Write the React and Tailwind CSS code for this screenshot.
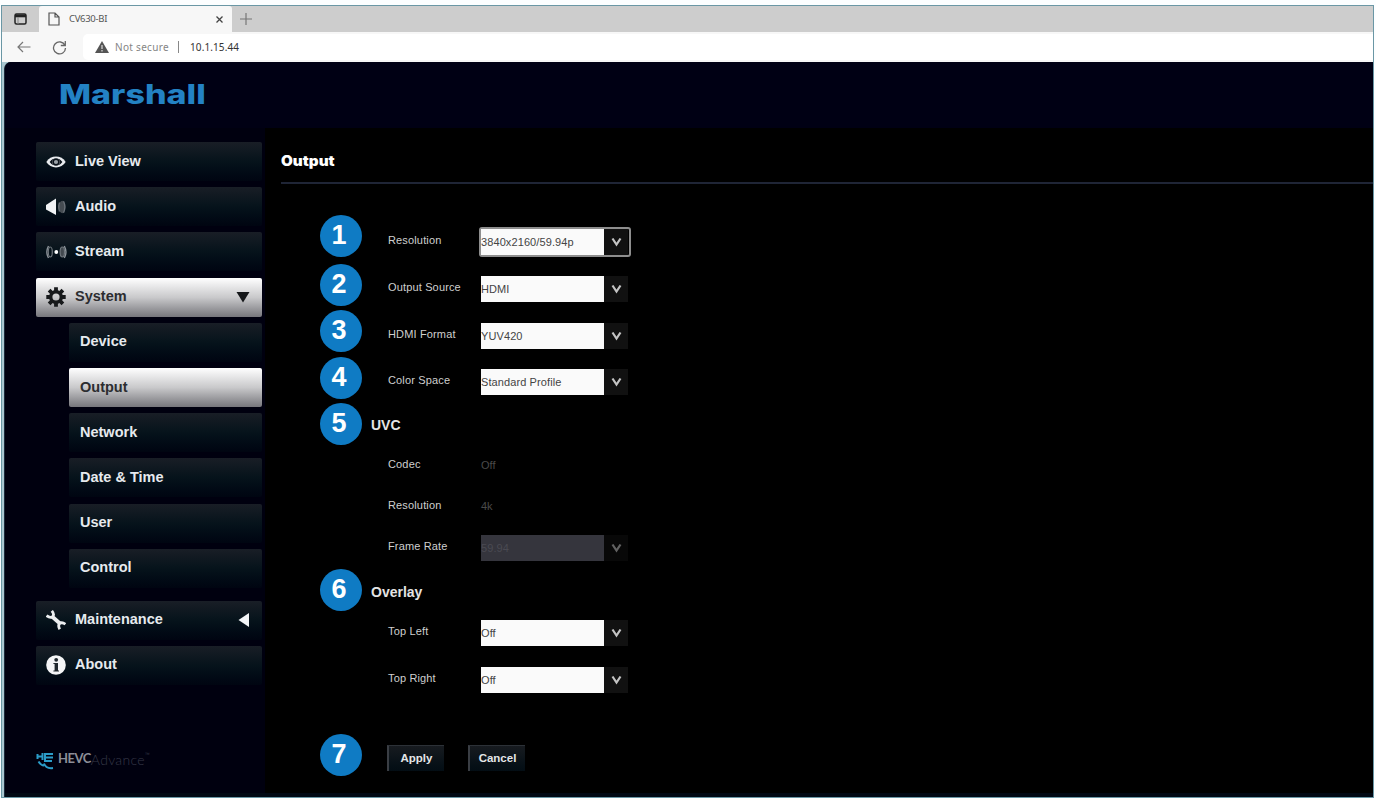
import clsx from 'clsx'

const mainItems = [
  { name: 'Live View', icon: EyeIcon },
  { name: 'Audio', icon: AudioIcon },
  { name: 'Stream', icon: StreamIcon },
  { name: 'System', icon: GearIcon, active: true, arrow: 'down' },
]

const systemItems = [
  { name: 'Device' },
  { name: 'Output', active: true },
  { name: 'Network' },
  { name: 'Date & Time' },
  { name: 'User' },
  { name: 'Control' },
]

const bottomItems = [
  { name: 'Maintenance', icon: WrenchIcon, arrow: 'left' },
  { name: 'About', icon: InfoIcon },
]

const steps = [
  { n: 1, gap: 'mt-0' },
  { n: 2, gap: 'mt-[7px]' },
  { n: 3, gap: 'mt-1' },
  { n: 4, gap: 'mt-[5px]' },
  { n: 5, gap: 'mt-1' },
  { n: 6, gap: 'mt-[124px]' },
  { n: 7, gap: 'mt-[123px]' },
]

function EyeIcon() {
  return (
    <svg width="20" height="20" viewBox="0 0 20 20" fill="none">
      <path d="M.3 10C4.500 2.800 15.500 2.800 19.700 10C15.500 17.200 4.500 17.200 .3 10Z" fill="#e8ebee" />
      <path d="M3.600 10Q5.400 7.700 7.300 6.700Q5.300 10 7.300 13.300Q5.400 12.300 3.600 10ZM16.400 10Q14.600 7.700 12.700 6.700Q14.700 10 12.700 13.300Q14.600 12.300 16.400 10Z" fill="#0b131b" />
      <circle cx="10" cy="10" r="2.900" fill="#9aa1a7" stroke="#0b131b" strokeWidth="1.600" />
    </svg>
  )
}

function AudioIcon() {
  return (
    <svg width="20" height="20" viewBox="0 0 20 20" fill="none">
      <path d="M0 8L10 1.500V18L0 12.500Z" fill="#f1f3f5" />
      <ellipse cx="16.200" cy="10" rx="3.200" ry="6.200" fill="#454c52" />
      <path d="M13.500 5.500Q12 10 13.500 14.500M17.500 4.300Q20.300 10 17.500 15.700" stroke="#6b7279" strokeWidth="1.300" />
    </svg>
  )
}

function StreamIcon() {
  return (
    <svg width="21" height="20" viewBox="0 0 21 20" fill="none">
      <path d="M2.500 4Q-.8 10 2.500 16" stroke="#8b9298" strokeWidth="1.400" />
      <ellipse cx="4.300" cy="10" rx="2" ry="5" stroke="#70777d" strokeWidth="1.200" />
      <circle cx="10.300" cy="10" r="1.900" fill="#fff" />
      <ellipse cx="16.300" cy="10" rx="2.200" ry="5" fill="#42494f" stroke="#70777d" strokeWidth="1.200" />
      <path d="M18.300 4Q21.600 10 18.300 16" stroke="#8b9298" strokeWidth="1.400" />
    </svg>
  )
}

function GearIcon() {
  return (
    <svg width="20" height="20" viewBox="0 0 20 20" fill="none" stroke="#17191b">
      <circle cx="10" cy="10" r="5.300" strokeWidth="3.400" />
      <path strokeWidth="3.800" d="M10 .3V4M10 16V19.700M.3 10H4M16 10H19.700M3.100 3.100L5.800 5.800M14.200 14.200L16.900 16.900M3.100 16.900L5.800 14.200M14.200 5.800L16.900 3.100" />
    </svg>
  )
}

function WrenchIcon() {
  return (
    <svg width="20" height="20" viewBox="0 0 20 20" fill="none" stroke="#eceef0">
      <path strokeWidth="3.800" d="M6 6.500L14 13.500" />
      <path strokeWidth="2.800" d="M5.800 .8Q8.800 4.600 6.600 6.600Q4.200 8.400 .6 5.600M19.400 14.200Q16 11.700 13.700 13.500Q11.600 15.600 13.800 19.200" />
    </svg>
  )
}

function InfoIcon() {
  return (
    <svg width="20" height="20" viewBox="0 0 20 20" fill="none">
      <circle cx="10" cy="10" r="9.800" fill="#f4f5f6" />
      <circle cx="10.200" cy="4.800" r="1.900" fill="#20272d" />
      <path d="M7.400 8H12V15.400H13V16.500H7.400V15.400H8.600V9H7.400Z" fill="#20272d" />
    </svg>
  )
}

function Arrow({ dir }) {
  return (
    <svg width="14" height="14" viewBox="0 0 14 14" className="ml-auto mr-3">
      {dir === 'down'
        ? <path d="M.5 2H13.500L7 12.500Z" fill="#15171a" />
        : <path d="M13 0V14L2.500 7Z" fill="#f3f5f7" />}
    </svg>
  )
}

function MenuItem({ item, sub }) {
  const Icon = item.icon
  return (
    <button
      className={clsx(
        'flex h-[39px] shrink-0 items-center rounded-[2px] text-left text-[14.5px] font-bold',
        sub ? 'ml-[33px] w-[193px] pl-[11px]' : 'w-[226px] pl-[10px]',
        item.active
          ? 'bg-linear-to-b from-[#ffffff] via-[#c9c9cb] to-[#77777c] text-[#2c2d30]'
          : 'bg-linear-to-b from-[#191e26] via-[#06131b] to-[#000511] text-[#e6eaee]'
      )}
    >
      {Icon && <span className="w-[29px] shrink-0"><Icon /></span>}
      {item.name}
      {item.arrow && <Arrow dir={item.arrow} />}
    </button>
  )
}

function BrowserBar() {
  return (
    <div className="font-['Noto_Sans','Open_Sans',sans-serif] text-[#555]">
      <div className="flex h-[26px] bg-[#cdcdcd]">
        <div className="flex w-[37px] items-center pl-3">
          <svg width="13" height="12" viewBox="0 0 13 12" fill="none">
            <rect x="1" y="1" width="11" height="10" rx="1.500" stroke="#222" strokeWidth="1.500" />
            <path d="M1 1.500H12V4.300H1Z" fill="#222" />
            <path d="M4 4V11" stroke="#888" />
          </svg>
        </div>
        <div className="flex w-[193px] items-center rounded-t-[3px] bg-[#f7f7f7] pl-[9px] pr-[8px]">
          <svg width="12" height="14" viewBox="0 0 12 14" fill="none" stroke="#555" strokeWidth="1.200">
            <path d="M1 1H7L11 5V13H1ZM7 1V5H11" />
          </svg>
          <span className="ml-[9px] text-[9.5px] tracking-[-0.3px]">CV630-BI</span>
          <svg className="ml-auto" width="9" height="9" viewBox="0 0 9 9" stroke="#444" strokeWidth="1.300">
            <path d="M1.500 1.500L7.500 7.500M7.500 1.500L1.500 7.500" />
          </svg>
        </div>
        <svg className="ml-2 mt-[7px]" width="12" height="12" viewBox="0 0 12 12" stroke="#777" strokeWidth="1.200">
          <path d="M6 0V12M0 6H12" />
        </svg>
      </div>
      <div className="flex h-[30px] items-center bg-[#f7f7f7]">
        <svg className="ml-[15px]" width="14" height="12" viewBox="0 0 14 12" fill="none" stroke="#777" strokeWidth="1.200">
          <path d="M13.500 6H1M6 1L1 6L6 11" />
        </svg>
        <svg className="ml-[21px]" width="15" height="15" viewBox="0 0 15 15" fill="none" stroke="#666" strokeWidth="1.300">
          <path d="M13 5.500A6 6 0 1 0 13.500 8M13.300 1V5.500H8.800" />
        </svg>
        <div className="ml-4 flex h-[26px] flex-1 items-center rounded-l-[5px] bg-white pl-3">
          <svg width="14" height="12" viewBox="0 0 14 12">
            <path d="M7 0L14 12H0Z" fill="#555" />
            <path d="M7 4V8M7 9V10.500" stroke="#ddd" strokeWidth="1.200" />
          </svg>
          <span className="ml-[6px] w-[54px] whitespace-nowrap text-[10px] tracking-[0.3px] text-[#858585]">Not secure</span>
          <span className="ml-[9px] h-3 w-px bg-[#888]" />
          <span className="ml-[11px] text-[10px] tracking-[0.1px] text-[#333]">10.1.15.44</span>
        </div>
      </div>
    </div>
  )
}

function Sidebar() {
  return (
    <aside className="flex w-[260px] shrink-0 flex-col pl-[31px] pt-[14px]">
      <nav className="flex flex-col gap-[6.2px]">
        {mainItems.map(item => <MenuItem key={item.name} item={item} />)}
        {systemItems.map(item => <MenuItem key={item.name} item={item} sub />)}
      </nav>
      <nav className="mt-[13px] flex flex-col gap-[6px]">
        {bottomItems.map(item => <MenuItem key={item.name} item={item} />)}
      </nav>

      {/* Codec licence logo */}
      <div className="mt-[67px] flex items-center">
        <svg width="18" height="18" viewBox="0 0 18 18" fill="none" stroke="#2b9cc9" strokeWidth="2">
          <path d="M1.500 2V7M1.500 4.500H6M6.500 1V8M9.500 2H17M9.500 5.500H17M9.500 9H16M9 1V10" />
          <path d="M2.500 9.500Q5 13.500 8 13.500M8 11.500Q10 17 17 16" />
        </svg>
        <span className="-mt-[3px] ml-1 font-[Lato,sans-serif] text-[13px] font-bold tracking-[-0.5px] text-[#8c8e98]">HEVC</span>
        <span className="-mt-[3px] font-[Lato,sans-serif] text-[14px] font-light tracking-[0.3px] text-[#363848]">Advance</span>
        <span className="-mt-3 text-[5px] text-[#363848]">™</span>
      </div>
    </aside>
  )
}

function Select({ value, focused, disabled }) {
  return (
    <div className={clsx(
      'flex h-[30px] w-[152px] items-center rounded-[3px] border-2 pr-px',
      focused ? 'border-[#8e8e8e]' : 'border-transparent'
    )}>
      <div className={clsx(
        'flex h-[26px] w-[123px] items-center pt-px text-[11px] tracking-[0.1px]',
        disabled ? 'bg-[#35353d] text-[#4a4a52]' : 'bg-[#fafafa] text-[#444]'
      )}>
        {value}
      </div>
      <div className={clsx('flex h-[26px] flex-1 items-center justify-center bg-[#111111]', disabled && 'opacity-50')}>
        <svg width="11" height="10" viewBox="0 0 11 10" fill="none" stroke="#c4c4c4" strokeWidth="2.200">
          <path d="M1.500 1.500L5.500 7.500L9.500 1.500" />
        </svg>
      </div>
    </div>
  )
}

function Row({ label, h, children }) {
  return (
    <div className={clsx('flex shrink-0 items-center pl-[17px]', h)}>
      <span className="-mt-[3px] w-[91px] whitespace-nowrap text-[11px] tracking-[0.15px] text-[#cfcfcf]">{label}</span>
      {children}
    </div>
  )
}

function Disabled({ children }) {
  return <span className="-mt-px ml-[2px] text-[11px] text-[#4a4a4a]">{children}</span>
}

function OutputForm() {
  return (
    <div className="flex">
      <div className="flex flex-col pt-[31px]">
        {steps.map(s => (
          <div
            key={s.n}
            className={clsx('flex size-[42px] shrink-0 items-center justify-center rounded-full bg-[#0f7bc4] pr-[4px] pb-[2px] text-[27px] leading-none font-bold text-white', s.gap)}
          >
            {s.n}
          </div>
        ))}
      </div>

      <div className="ml-[9px] flex flex-col pt-[34px]">
        <Row label="Resolution" h="h-[47px]"><Select value="3840x2160/59.94p" focused /></Row>
        <Row label="Output Source" h="h-[47px]"><Select value="HDMI" /></Row>
        <Row label="HDMI Format" h="h-[47px]"><Select value="YUV420" /></Row>
        <Row label="Color Space" h="h-[46px]"><Select value="Standard Profile" /></Row>
        <h2 className="flex h-10 items-center pt-px text-[14px] font-bold text-[#e4e4e4]">UVC</h2>
        <Row label="Codec" h="h-[42px]"><Disabled>Off</Disabled></Row>
        <Row label="Resolution" h="h-10"><Disabled>4k</Disabled></Row>
        <Row label="Frame Rate" h="h-[42px]"><Select value="59.94" disabled /></Row>
        <h2 className="flex h-12 items-center pb-px text-[14px] font-bold text-[#e4e4e4]">Overlay</h2>
        <Row label="Top Left" h="h-[32px]"><Select value="Off" /></Row>
        <Row label="Top Right" h="h-[62px]"><Select value="Off" /></Row>
        <div className="mt-[34px] flex gap-6 pl-4">
          {['Apply', 'Cancel'].map(name => (
            <button
              key={name}
              className="h-[26px] w-[57px] border-t border-l-2 border-t-[#2c3137] border-l-[#3a3e44] bg-linear-to-b from-[#171b20] to-[#030d14] text-[11.5px] font-bold text-[#e4e6e8]"
            >
              {name}
            </button>
          ))}
        </div>
      </div>
    </div>
  )
}

export default function App() {
  return (
    <div className="h-[798px] w-[1376px] overflow-hidden bg-[#fcfeff] pt-[5px] pr-[2px] pl-px">
      <div className="flex h-[793px] flex-col border border-[#6a97a5] bg-white">
        <BrowserBar />
        <div className="flex min-h-0 flex-1 bg-[#a9c6cf] pl-[2px]">
          <div className="flex min-w-0 flex-1 flex-col overflow-hidden rounded-tl-[7px] border-l border-[#1c2c3c] bg-[#00000f] font-['Liberation_Sans',Arial,sans-serif]">
            <header className="flex h-[66px] shrink-0 items-center bg-[#000014] pl-[54px]">
              <div className="origin-left scale-x-[1.26] font-[Inter,sans-serif] text-[27px] font-extrabold text-[#2382c4]">Marshall</div>
            </header>
            <div className="flex min-h-0 flex-1">
              <Sidebar />
              <main className="min-w-0 flex-1 overflow-hidden bg-black pl-4">
                <div className="flex h-[56px] items-center border-b-2 border-[#1f2536]">
                  <h1 className="mt-[11px] origin-left scale-x-[1.09] font-[Inter,sans-serif] text-[14px] font-black text-white">Output</h1>
                </div>
                <div className="pl-[39px]">
                  <OutputForm />
                </div>
              </main>
            </div>
            <div className="h-1 shrink-0 bg-[#020914]" />
          </div>
        </div>
      </div>
    </div>
  )
}
